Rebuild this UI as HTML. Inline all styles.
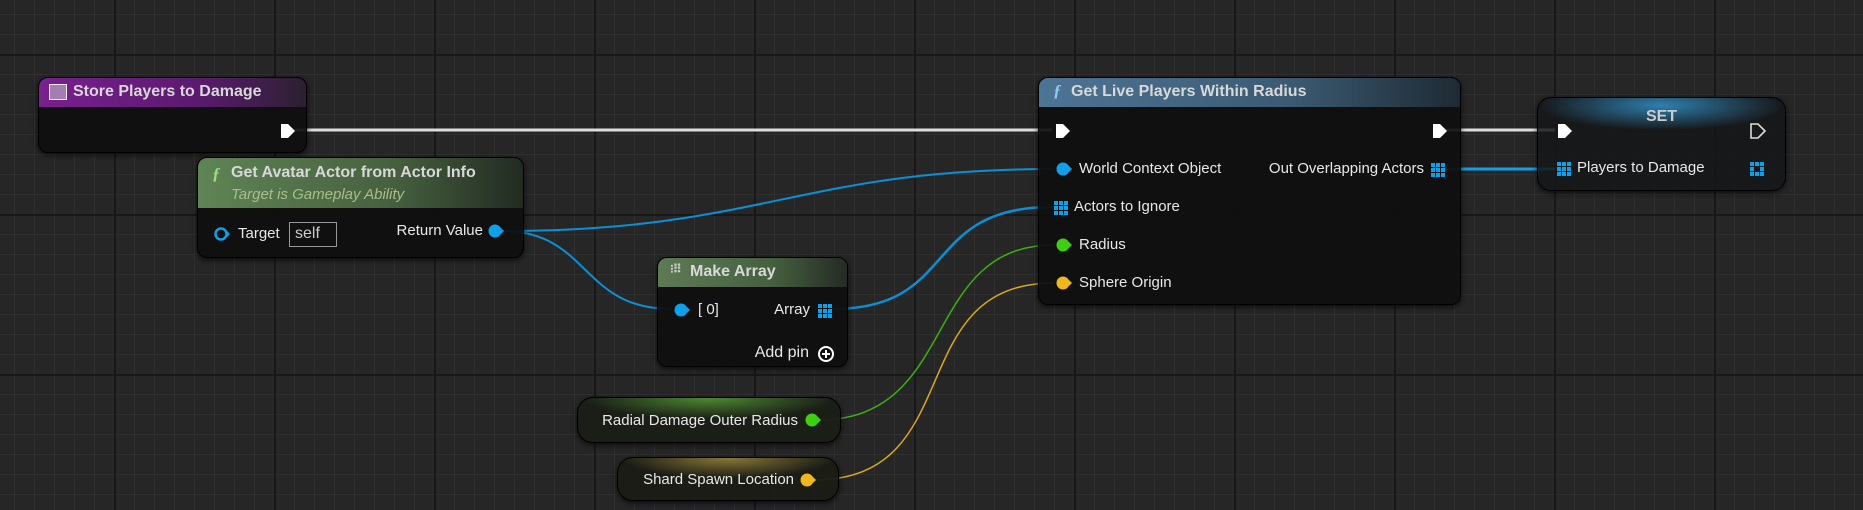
<!DOCTYPE html>
<html><head><meta charset="utf-8"><style>
*{margin:0;padding:0;box-sizing:border-box}
body{width:1863px;height:510px;overflow:hidden;background:#262626;font-family:"Liberation Sans",sans-serif;position:relative}
.grid{position:absolute;inset:0;
background-image:
linear-gradient(#181818 2px,transparent 2px),
linear-gradient(90deg,#181818 2px,transparent 2px),
linear-gradient(#303030 1px,transparent 1px),
linear-gradient(90deg,#303030 1px,transparent 1px);
background-size:160px 160px,160px 160px,20px 20px,20px 20px;
background-position:0 54px,114px 0,0 14px,14px 0}
.node{position:absolute;background:rgba(14,15,14,.93);border:1px solid #000;border-radius:10px;box-shadow:0 2px 6px rgba(0,0,0,.7);overflow:hidden}
.hdr{position:absolute;left:0;right:0;top:0;color:#d8d8d8;font-weight:bold;font-size:16px}
.t{position:absolute;color:#e8e8e8;font-size:15px;white-space:nowrap}
svg{position:absolute;left:0;top:0}
</style></head><body>
<div class="grid"></div>
<svg width="1863" height="510">
<g fill="none">
<path d="M292 130 L1052 130" stroke="#ddd" stroke-width="3"/>
<path d="M1445 130 L1555 130" stroke="#ddd" stroke-width="3"/>
<path d="M1445 169 L1555 169" stroke="#0ea0e8" stroke-width="3"/>
<path d="M502 231 C760 231 800 169 1054 169" stroke="#0b8fd6" stroke-width="2"/>
<path d="M502 231 C590 231 580 309 672 309" stroke="#0b8fd6" stroke-width="2"/>
<path d="M832 309 C960 309 920 207 1052 207" stroke="#0b8fd6" stroke-width="2.5"/>
<path d="M818 420 C960 420 920 245 1054 245" stroke="#3cb010" stroke-width="1.5"/>
<path d="M814 480 C970 480 900 283 1054 283" stroke="#d9a81c" stroke-width="1.5"/>
</g></svg>

<div class="node" style="left:38px;top:77px;width:269px;height:76px">
<div class="hdr" style="height:29px;background:linear-gradient(90deg,#7a1f8f,#5a1a6e 60%,#2b2030)">
<div style="position:absolute;left:10px;top:6px;width:18px;height:16px;border:1px solid #eee;background:#a27fae"></div>
<div style="position:absolute;left:34px;top:5px">Store Players to Damage</div></div>
<svg style="left:240px;top:44px" width="20" height="20"><path d="M2 2h7l7 7-7 7H2z" fill="#fff"/></svg>
</div>

<div class="node" style="left:197px;top:157px;width:327px;height:101px">
<div class="hdr" style="height:50px;background:linear-gradient(90deg,#5f8455,#46603f 60%,#222a22)">
<div style="position:absolute;left:14px;top:6px;color:#9fdc8a;font-style:italic;font-family:'Liberation Serif',serif;font-size:17px">ƒ</div>
<div style="position:absolute;left:33px;top:6px">Get Avatar Actor from Actor Info</div>
<div style="position:absolute;left:33px;top:28px;color:#a8bd8a;font-style:italic;font-weight:normal;font-size:15px">Target is Gameplay Ability</div></div>
<svg style="left:15px;top:68px" width="20" height="18"><circle cx="8" cy="8" r="5.5" fill="none" stroke="#0ea0e8" stroke-width="2.5"/><path d="M14 5l3 3-3 3z" fill="#0ea0e8"/></svg>
<div class="t" style="left:40px;top:67px">Target</div>
<div style="position:absolute;left:91px;top:64px;width:48px;height:25px;border:1px solid #999;color:#ccc;font-size:16px;padding:2px 5px">self</div>
<div class="t" style="right:40px;top:64px">Return Value</div>
<svg style="left:289px;top:65px" width="20" height="18"><circle cx="8" cy="8" r="6.5" fill="#0ea0e8"/><path d="M14 5l3 3-3 3z" fill="#0ea0e8"/></svg>
</div>

<div class="node" style="left:657px;top:257px;width:191px;height:110px">
<div class="hdr" style="height:29px;background:linear-gradient(90deg,#5d7a55,#46603f 60%,#252b25)">
<div style="position:absolute;left:12px;top:4px;color:#ccc;font-size:12px;letter-spacing:-1px">⁝⠿</div>
<div style="position:absolute;left:32px;top:5px">Make Array</div></div>
<svg style="left:15px;top:44px" width="20" height="18"><circle cx="8" cy="8" r="6.5" fill="#0ea0e8"/><path d="M14 5l3 3-3 3z" fill="#0ea0e8"/></svg>
<div class="t" style="left:40px;top:43px">[ 0]</div>
<div class="t" style="right:37px;top:43px">Array</div>
<svg style="left:160px;top:46px" width="16" height="16" fill="#0ea0e8"><rect x="0" y="0" width="4" height="4"/><rect x="5" y="0" width="4" height="4"/><rect x="10" y="0" width="4" height="4"/><rect x="0" y="5" width="4" height="4"/><rect x="5" y="5" width="4" height="4"/><rect x="10" y="5" width="4" height="4"/><rect x="0" y="10" width="4" height="4"/><rect x="5" y="10" width="4" height="4"/><rect x="10" y="10" width="4" height="4"/></svg>
<div class="t" style="right:38px;top:86px;font-size:16px">Add pin</div>
<svg style="left:159px;top:87px" width="18" height="18"><circle cx="9" cy="9" r="7" fill="none" stroke="#fff" stroke-width="2"/><path d="M9 5v8M5 9h8" stroke="#fff" stroke-width="2"/></svg>
</div>

<div class="node" style="left:577px;top:397px;width:264px;height:46px;border-radius:16px;background:radial-gradient(ellipse 60% 60% at 50% 0%,#4e8a32,rgba(25,30,22,.95) 80%)">
<div class="t" style="right:42px;top:14px">Radial Damage Outer Radius</div>
<svg style="left:226px;top:14px" width="20" height="18"><circle cx="8" cy="8" r="6.5" fill="#3fcf12"/><path d="M14 5l3 3-3 3z" fill="#3fcf12"/></svg>
</div>

<div class="node" style="left:617px;top:457px;width:222px;height:44px;border-radius:16px;background:radial-gradient(ellipse 60% 60% at 50% 0%,#8a7a36,rgba(28,28,22,.95) 80%)">
<div class="t" style="right:44px;top:13px">Shard Spawn Location</div>
<svg style="left:181px;top:14px" width="20" height="18"><circle cx="8" cy="8" r="6.5" fill="#f0b81c"/><path d="M14 5l3 3-3 3z" fill="#f0b81c"/></svg>
</div>

<div class="node" style="left:1038px;top:77px;width:423px;height:228px">
<div class="hdr" style="height:29px;background:linear-gradient(90deg,#4d7594,#3b5a72 60%,#1e2a33)">
<div style="position:absolute;left:14px;top:3px;color:#8fc8f0;font-style:italic;font-family:'Liberation Serif',serif;font-size:17px">ƒ</div>
<div style="position:absolute;left:32px;top:5px">Get Live Players Within Radius</div></div>
<svg style="left:15px;top:44px" width="20" height="20"><path d="M2 2h7l7 7-7 7H2z" fill="#fff"/></svg>
<svg style="left:392px;top:44px" width="20" height="20"><path d="M2 2h7l7 7-7 7H2z" fill="#fff"/></svg>
<svg style="left:16px;top:83px" width="20" height="18"><circle cx="8" cy="8" r="6.5" fill="#0ea0e8"/><path d="M14 5l3 3-3 3z" fill="#0ea0e8"/></svg>
<div class="t" style="left:40px;top:82px">World Context Object</div>
<div class="t" style="right:36px;top:82px">Out Overlapping Actors</div>
<svg style="left:392px;top:85px" width="16" height="16" fill="#0ea0e8"><rect x="0" y="0" width="4" height="4"/><rect x="5" y="0" width="4" height="4"/><rect x="10" y="0" width="4" height="4"/><rect x="0" y="5" width="4" height="4"/><rect x="5" y="5" width="4" height="4"/><rect x="10" y="5" width="4" height="4"/><rect x="0" y="10" width="4" height="4"/><rect x="5" y="10" width="4" height="4"/><rect x="10" y="10" width="4" height="4"/></svg>
<svg style="left:15px;top:123px" width="16" height="16" fill="#0ea0e8"><rect x="0" y="0" width="4" height="4"/><rect x="5" y="0" width="4" height="4"/><rect x="10" y="0" width="4" height="4"/><rect x="0" y="5" width="4" height="4"/><rect x="5" y="5" width="4" height="4"/><rect x="10" y="5" width="4" height="4"/><rect x="0" y="10" width="4" height="4"/><rect x="5" y="10" width="4" height="4"/><rect x="10" y="10" width="4" height="4"/></svg>
<div class="t" style="left:35px;top:120px">Actors to Ignore</div>
<svg style="left:16px;top:159px" width="20" height="18"><circle cx="8" cy="8" r="6.5" fill="#3fcf12"/><path d="M14 5l3 3-3 3z" fill="#3fcf12"/></svg>
<div class="t" style="left:40px;top:158px">Radius</div>
<svg style="left:16px;top:197px" width="20" height="18"><circle cx="8" cy="8" r="6.5" fill="#f0b81c"/><path d="M14 5l3 3-3 3z" fill="#f0b81c"/></svg>
<div class="t" style="left:40px;top:196px">Sphere Origin</div>
</div>

<div class="node" style="left:1537px;top:97px;width:249px;height:94px;border-radius:14px;background:radial-gradient(ellipse 55% 30% at 50% 8%,#2f7fae,rgba(20,22,24,.85) 90%)">
<div style="position:absolute;left:0;right:0;top:10px;text-align:center;color:#ccc;font-weight:bold;font-size:16px">SET</div>
<svg style="left:18px;top:24px" width="20" height="20"><path d="M2 2h7l7 7-7 7H2z" fill="#fff"/></svg>
<svg style="left:211px;top:24px" width="20" height="20"><path d="M2 2h7l7 7-7 7H2z" fill="none" stroke="#ddd" stroke-width="1.6"/></svg>
<svg style="left:19px;top:64px" width="16" height="16" fill="#0ea0e8"><rect x="0" y="0" width="4" height="4"/><rect x="5" y="0" width="4" height="4"/><rect x="10" y="0" width="4" height="4"/><rect x="0" y="5" width="4" height="4"/><rect x="5" y="5" width="4" height="4"/><rect x="10" y="5" width="4" height="4"/><rect x="0" y="10" width="4" height="4"/><rect x="5" y="10" width="4" height="4"/><rect x="10" y="10" width="4" height="4"/></svg>
<div class="t" style="left:39px;top:61px">Players to Damage</div>
<svg style="left:212px;top:64px" width="16" height="16" fill="#0ea0e8"><rect x="0" y="0" width="4" height="4"/><rect x="5" y="0" width="4" height="4"/><rect x="10" y="0" width="4" height="4"/><rect x="0" y="5" width="4" height="4"/><rect x="10" y="5" width="4" height="4"/><rect x="0" y="10" width="4" height="4"/><rect x="5" y="10" width="4" height="4"/><rect x="10" y="10" width="4" height="4"/></svg>
</div>
</body></html>
